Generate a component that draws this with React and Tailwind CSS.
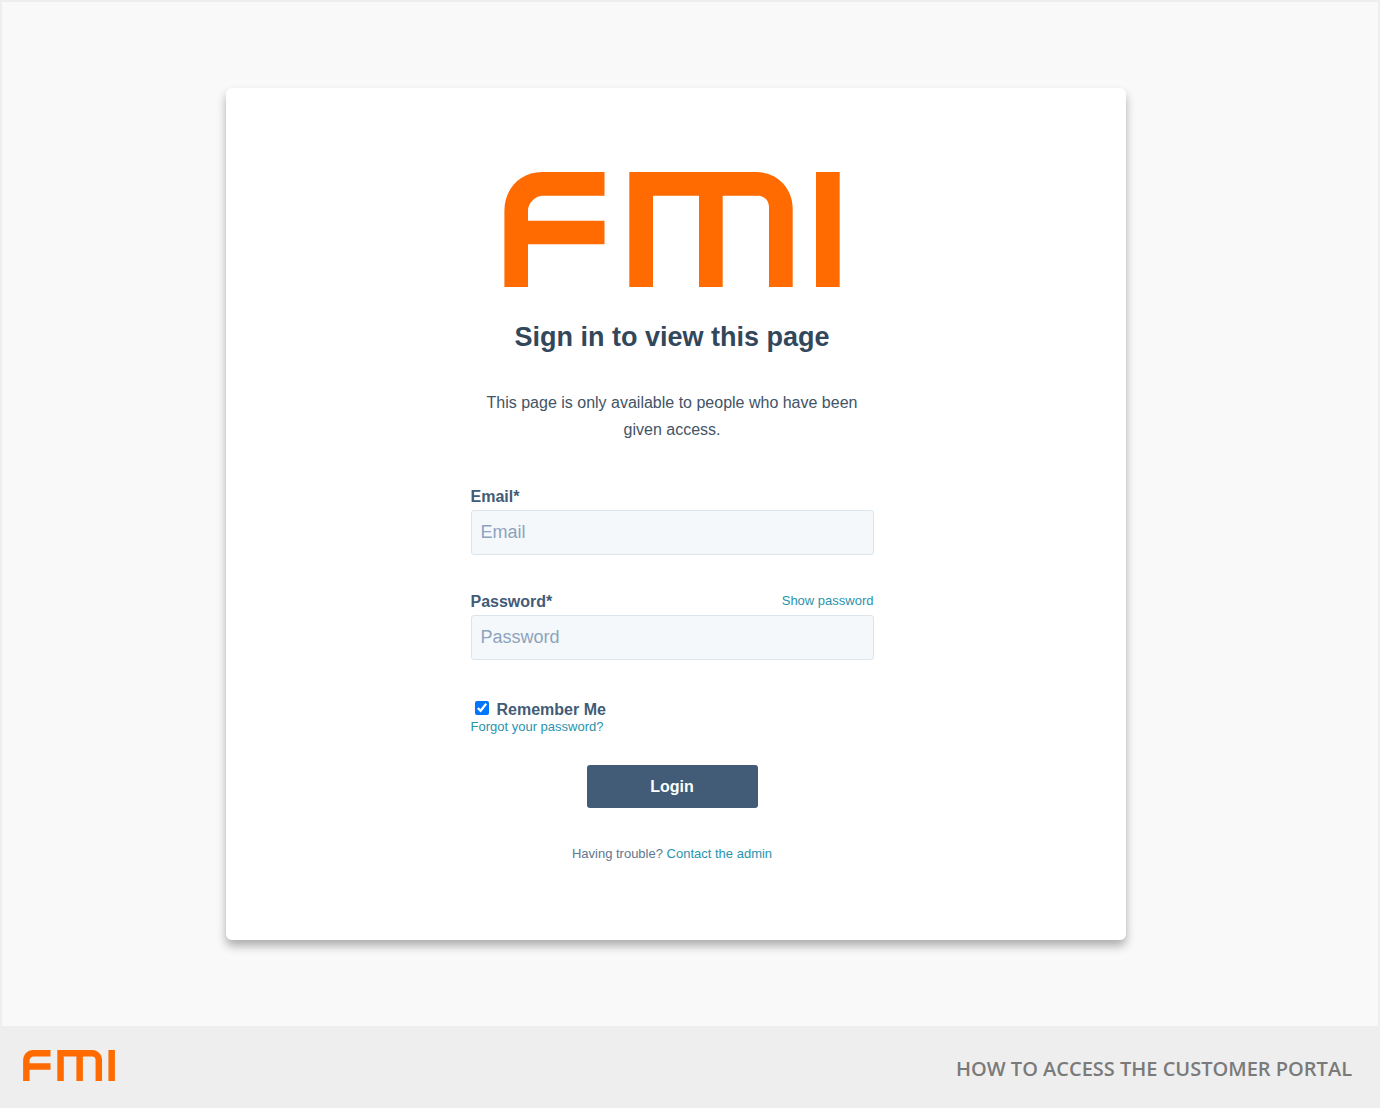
import { useState } from 'react'

function Logo({ className }) {
  return (
    <svg viewBox="0 0 336 115" className={className} fill="#FF6B00" role="img" aria-label="FMI">
      <path d="M38 0H100.500V23.700H38Q33 24 28.500 28.500T24 38.500V48.700H100.500V72.200H24V115H0.400V38.500C0.400 17 16 0 38 0Z" />
      <path d="M125.300 0H252.500C273 0 288.700 16 288.700 36.500V115H265V35.500C265 28.500 260.500 23.700 253.500 23.700H218.700V115H195V23.700H149V115H125.300Z" />
      <path d="M312 0H335.700V115H312Z" />
    </svg>
  )
}

function Field({ id, label, type, action }) {
  return (
    <div className="flex flex-col">
      <div className="flex items-start justify-between">
        <label htmlFor={id} className="text-base leading-5 font-bold text-[#425B76]">
          {label}
        </label>
        {action}
      </div>
      <input
        id={id}
        type={type}
        placeholder={label.replace('*', '')}
        required
        className="mt-[3px] h-[45px] w-full rounded-[3px] border border-[#DDE5EC] bg-[#F5F8FA] px-[9px] text-lg text-[#33475B] outline-none placeholder:text-[#8DA3BE] focus:border-[#7FBFD0]"
      />
    </div>
  )
}

function LoginForm() {
  const [showPassword, setShowPassword] = useState(false)

  return (
    <form className="mt-11 flex w-full flex-col" onSubmit={(e) => e.preventDefault()}>
      <div className="flex flex-col gap-[37px]">
        <Field id="email" label="Email*" type="email" />
        <Field
          id="password"
          label="Password*"
          type={showPassword ? 'text' : 'password'}
          action={
            <button
              type="button"
              className="text-[13px] leading-[18px] text-[#2A93AE]"
              onClick={() => setShowPassword(!showPassword)}
            >
              {showPassword ? 'Hide password' : 'Show password'}
            </button>
          }
        />
      </div>
      <div className="mt-10 flex items-start gap-2 pl-1">
        <input id="remember" type="checkbox" defaultChecked className="mt-px size-3.5" />
        <label htmlFor="remember" className="text-base leading-5 font-bold text-[#425B76]">
          Remember Me
        </label>
      </div>
      <a href="#forgot" className="self-start text-[13px] leading-[14px] text-[#2A93AE]">
        Forgot your password?
      </a>
      <button
        type="submit"
        className="mt-[31px] h-[43px] w-[171px] self-center rounded-[3px] bg-[#425B76] text-base font-bold text-white"
      >
        Login
      </button>
    </form>
  )
}

export default function App() {
  return (
    <div className="flex min-h-screen flex-col bg-[#EEEEEE] font-['Liberation_Sans',Arial,sans-serif]">
      <main className="mx-0.5 mt-0.5 flex flex-1 items-start justify-center bg-[#F9F9F9] pt-[86px] pr-7 pb-[86px]">
        <section className="w-full max-w-[900px] rounded-md bg-white pt-[84px] pr-2 pb-19 shadow-[0_6px_10px_rgba(0,0,0,0.3)]">
          <div className="mx-auto flex w-full max-w-[403px] flex-col items-center">
            <Logo className="w-[336px]" />
            <h1 className="mt-8 text-[27px] leading-9 font-bold text-[#33475B]">Sign in to view this page</h1>
            <p className="mt-[34px] text-center text-base leading-[27px] text-[#425466]">
              This page is only available to people who have been given access.
            </p>
            <LoginForm />
            <p className="mt-9 text-[13px] leading-5 text-[#5F7690]">
              Having trouble?{' '}
              <a href="#contact" className="text-[#2A93AE]">
                Contact the admin
              </a>
            </p>
          </div>
        </section>
      </main>
      <footer className="flex h-[82px] items-start justify-between pt-6 pr-7 pl-[23px]">
        <Logo className="w-[92px]" />
        <p className="font-['Open_Sans',sans-serif] text-xl leading-[38px] font-semibold text-[#7A7A7A]">
          HOW TO ACCESS THE CUSTOMER PORTAL
        </p>
      </footer>
    </div>
  )
}
